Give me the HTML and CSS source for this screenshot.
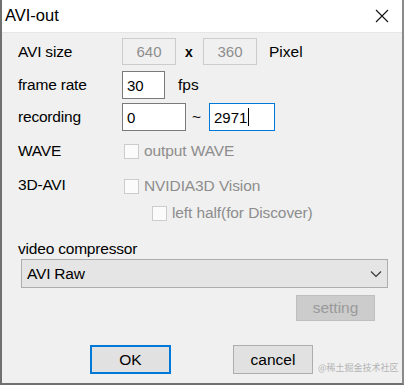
FILE: index.html
```html
<!DOCTYPE html>
<html>
<head>
    <link rel="stylesheet" href="styles.css">
</head>
<body>
    <div class="window">
        <div class="titlebar">
            <span class="title">AVI-out</span>
            <svg class="close" width="14" height="14" viewBox="0 0 14 14">
                <path d="M1 1 L13 13 M13 1 L1 13" stroke="#111" stroke-width="1.1" fill="none"/>
            </svg>
        </div>

        <div class="content">
            <div class="row row-size">
                <span class="label">AVI size</span>
                <span class="field disabled w54">640</span>
                <span class="sep">x</span>
                <span class="field disabled w54">360</span>
                <span class="unit">Pixel</span>
            </div>

            <div class="row row-rate">
                <span class="label">frame rate</span>
                <span class="field w43 left">30</span>
                <span class="unit fps">fps</span>
            </div>

            <div class="row row-rec">
                <span class="label">recording</span>
                <span class="field w64 left">0</span>
                <span class="tilde">~</span>
                <span class="field focus w66 left">2971<span class="caret"></span></span>
            </div>

            <div class="row row-wave">
                <span class="label">WAVE</span>
                <span class="check"></span>
                <span class="check-text">output WAVE</span>
            </div>

            <div class="row row-3d">
                <span class="label">3D-AVI</span>
                <span class="check"></span>
                <span class="check-text">NVIDIA3D Vision</span>
            </div>

            <div class="row row-half">
                <span class="check"></span>
                <span class="check-text">left half(for Discover)</span>
            </div>

            <div class="row row-comp">
                <span class="comp-label">video compressor</span>
            </div>

            <div class="select">
                <span>AVI Raw</span>
                <svg width="12" height="8" viewBox="0 0 12 8">
                    <path d="M1 1.5 L6 6.5 L11 1.5" stroke="#333" stroke-width="1.1" fill="none"/>
                </svg>
            </div>

            <div class="setting-row">
                <button class="btn setting" disabled>setting</button>
            </div>

            <div class="buttons">
                <button class="btn ok">OK</button>
                <button class="btn cancel">cancel</button>
            </div>
        </div>

        <span class="watermark">@稀土掘金技术社区</span>
    </div>
</body>
</html>
```

FILE: styles.css
```css
body {
    margin: 0;
    font-family: "Liberation Sans", Arial, "Noto Sans CJK SC", sans-serif;
}
.window {
    position: relative;
    width: 404px;
    height: 385px;
    box-sizing: border-box;
    background: #f0f0f0;
    border-left: 2px solid #707070;
    border-bottom: 2px solid #707070;
    border-right: 2px solid #8a8a8a;
    overflow: hidden;
}
.titlebar {
    height: 33px;
    background: #fff;
    display: flex;
    align-items: center;
    padding-left: 3px;
    padding-right: 13px;
    justify-content: space-between;
    border-bottom: 1px solid #e6e6e6;
    box-sizing: border-box;
}
.title {
    font-size: 16.5px;
    color: #000;
    padding-bottom: 1px;
}
.content {
    padding-left: 16px;
    font-size: 15.5px;
    color: #000;
}
.row {
    display: flex;
    align-items: center;
}
.label {
    width: 104px;
    flex-shrink: 0;
    letter-spacing: -0.2px;
}
.comp-label {
    white-space: nowrap;
    letter-spacing: -0.2px;
}
.field {
    box-sizing: border-box;
    height: 100%;
    border: 1px solid #7a7a7a;
    background: #fff;
    display: flex;
    align-items: center;
    justify-content: center;
    font-size: 15px;
}
.field.left {
    justify-content: flex-start;
    padding-left: 4px;
}
.field.disabled {
    border-color: #cccccc;
    background: #f0f0f0;
    color: #8d8d8d;
}
.field.focus {
    border-color: #0078d7;
}
.caret {
    display: inline-block;
    width: 1px;
    height: 18px;
    background: #000;
    margin-left: 1px;
}
.w54 { width: 54px; }
.w43 { width: 43px; }
.w64 { width: 64px; }
.w66 { width: 66px; }
.sep {
    width: 27px;
    padding-left: 9px;
    box-sizing: border-box;
    font-weight: bold;
    font-size: 14px;
}
.unit {
    margin-left: 12px;
}
.fps {
    margin-left: 13px;
}
.tilde {
    width: 23px;
    padding-left: 6px;
    box-sizing: border-box;
}
.row-size {
    margin-top: 5px;
    height: 27px;
}
.row-rate {
    margin-top: 6px;
    height: 28px;
}
.row-rec {
    margin-top: 4px;
    height: 28px;
}
.row-wave {
    margin-top: 12px;
    height: 16px;
}
.row-3d {
    margin-top: 19px;
    height: 16px;
}
.row-3d .label {
    position: relative;
    top: -1px;
}
.row-half {
    margin-top: 11px;
    height: 16px;
    padding-left: 132px;
}
.row-comp {
    margin-top: 19px;
    height: 18px;
}
.check {
    width: 15px;
    height: 15px;
    box-sizing: border-box;
    border: 1px solid #cccccc;
    background: #fbfbfb;
    margin-left: 2px;
    flex-shrink: 0;
}
.check-text {
    margin-left: 5px;
    color: #8d8d8d;
    letter-spacing: -0.1px;
}
.select {
    margin-top: 1px;
    margin-left: 3px;
    width: 367px;
    height: 29px;
    box-sizing: border-box;
    border: 1px solid #adadad;
    background: #e5e5e5;
    display: flex;
    align-items: center;
    justify-content: space-between;
    padding-left: 5px;
    padding-right: 5px;
    letter-spacing: -0.2px;
}
.setting-row {
    margin-top: 7px;
    display: flex;
    justify-content: flex-end;
    padding-right: 27px;
}
.btn {
    font-family: "Liberation Sans", Arial, sans-serif;
    font-size: 15.5px;
    box-sizing: border-box;
    background: #e1e1e1;
    border: 1px solid #adadad;
    padding: 0;
    color: #000;
}
.setting {
    width: 79px;
    height: 26px;
    background: #cccccc;
    border-color: #bfbfbf;
    color: #9a9a9a;
}
.buttons {
    margin-top: 24px;
    display: flex;
    padding-left: 72px;
    gap: 62px;
}
.ok {
    width: 81px;
    height: 29px;
    border: 2px solid #0078d7;
}
.cancel {
    width: 80px;
    height: 29px;
}
.watermark {
    position: absolute;
    left: 316px;
    top: 362px;
    font-size: 9px;
    line-height: 12px;
    white-space: nowrap;
    color: #b4b4b4;
    font-family: "Noto Sans CJK SC", sans-serif;
}
```
